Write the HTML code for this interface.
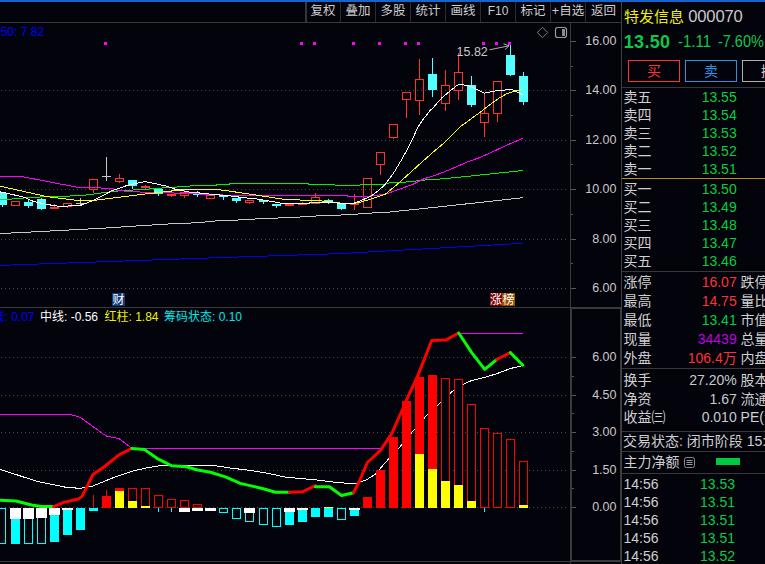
<!DOCTYPE html>
<html lang="zh-CN">
<head>
<meta charset="utf-8">
<title>特发信息 000070</title>
<style>
html,body{margin:0;padding:0;background:#03030c;}
body{width:765px;height:564px;overflow:hidden;position:relative;font-family:"Liberation Sans","Noto Sans CJK SC",sans-serif;color:#c8c8c8;}
#topbar{position:absolute;left:0;top:0;width:765px;height:2px;background:#1464d2;}
#toolbar{position:absolute;left:0;top:2px;width:621px;height:20px;border-bottom:1px solid #383838;}
.tb{position:absolute;top:0;height:20px;line-height:19px;font-size:12.5px;text-align:center;color:#cdcdcd;border-left:1px solid #2c2c2c;box-sizing:border-box;white-space:nowrap;}
#sep0{position:absolute;left:305px;top:2px;width:2px;height:20px;background:#363636;}
svg{position:absolute;left:0;top:0;}
svg text{font-family:"Liberation Sans","Noto Sans CJK SC",sans-serif;}
#ma250{position:absolute;left:0.7px;top:25.3px;font-size:12px;line-height:15px;color:#0000ff;white-space:nowrap;}
#subhdr{position:absolute;left:0;top:309.5px;font-size:12px;line-height:15px;white-space:nowrap;width:300px;height:15px;}
#subhdr span{position:absolute;top:0;}
.badge{position:absolute;height:13px;line-height:14.5px;font-size:12px;color:#fff;text-align:center;overflow:hidden;}
#panel{position:absolute;left:621px;top:2px;width:144px;height:562px;border-left:1px solid #404040;overflow:hidden;box-sizing:border-box;}
#panel .hl{position:absolute;left:0;width:144px;height:1px;background:#383838;}
#title{position:absolute;left:2px;top:5px;font-size:15px;line-height:20px;color:#f0f000;white-space:nowrap;}
.q{position:absolute;line-height:1;white-space:nowrap;transform-origin:0 50%;}
#code{left:65.6px;top:7.1px;font-size:16.6px;color:#c8c8c8;letter-spacing:-0.2px;left:66.3px}
#last{left:1.8px;top:31px;font-size:18px;font-weight:bold;color:#10c848;letter-spacing:0.3px;}
#chg{left:55.8px;top:32.4px;font-size:15.8px;color:#10c848;transform:scaleX(0.95);}
#pct{left:96px;top:32.4px;font-size:15.8px;color:#10c848;transform:scaleX(0.915);}
.btn{position:absolute;top:58px;height:20px;width:50px;border:1px solid;text-align:center;font-size:14px;line-height:20.5px;}
.r{position:absolute;left:0;width:144px;font-size:14px;white-space:nowrap;}
.r .l{position:absolute;left:1.5px;color:#d0d0d0;}
.r .v{position:absolute;right:29.3px;font-size:14px;}
.r .l2{position:absolute;left:118.6px;color:#d0d0d0;}
.sm{font-size:11px;letter-spacing:-1px;position:relative;top:-1px;}
</style>
</head>
<body>
<div id="topbar"></div>
<div id="toolbar"><div class="tb" style="left:305px;width:35px">复权</div><div class="tb" style="left:340px;width:35px">叠加</div><div class="tb" style="left:375px;width:35px">多股</div><div class="tb" style="left:410px;width:35px">统计</div><div class="tb" style="left:445px;width:35px">画线</div><div class="tb" style="left:480px;width:35px"><span style="font-size:12px">F10</span></div><div class="tb" style="left:515px;width:35px">标记</div><div class="tb" style="left:550px;width:35px">+自选</div><div class="tb" style="left:585px;width:36px">返回</div></div>
<div id="sep0"></div>
<svg width="622" height="564" viewBox="0 0 622 564">
<g shape-rendering="crispEdges" fill="#3a3a3a">
<rect x="570" y="22" width="1" height="542"/>
<rect x="0" y="307" width="621" height="1"/>
<rect x="0" y="561" width="621" height="1"/>
<rect x="571.5" y="308.5" width="49" height="252" fill="none" stroke="#3a3a3a" stroke-width="1"/>
</g>
<g id="main">
<line x1="1" y1="90.5" x2="567" y2="90.5" stroke="#4a4a4a" stroke-width="1" stroke-dasharray="1 3"/>
<line x1="1" y1="140.5" x2="567" y2="140.5" stroke="#4a4a4a" stroke-width="1" stroke-dasharray="1 3"/>
<line x1="1" y1="189.5" x2="567" y2="189.5" stroke="#4a4a4a" stroke-width="1" stroke-dasharray="1 3"/>
<line x1="1" y1="239.5" x2="567" y2="239.5" stroke="#4a4a4a" stroke-width="1" stroke-dasharray="1 3"/>
<line x1="1" y1="288.5" x2="567" y2="288.5" stroke="#4a4a4a" stroke-width="1" stroke-dasharray="1 3"/>
<g shape-rendering="crispEdges">
<rect x="2" y="192" width="1" height="15" fill="#54ffff"/>
<rect x="-2" y="193" width="9" height="12" fill="#54ffff"/>
<rect x="11.5" y="201.5" width="8" height="4" fill="none" stroke="#ff3232" stroke-width="1"/>
<rect x="28" y="199" width="1" height="9" fill="#54ffff"/>
<rect x="24" y="202" width="9" height="4" fill="#54ffff"/>
<rect x="41" y="198" width="1" height="12" fill="#54ffff"/>
<rect x="37" y="199" width="9" height="10" fill="#54ffff"/>
<rect x="54" y="204" width="1" height="5" fill="#ff3232"/>
<rect x="50" y="207" width="9" height="2" fill="#ff3232"/>
<rect x="67" y="207" width="1" height="1" fill="#ff3232"/>
<rect x="63.5" y="203.5" width="8" height="3" fill="none" stroke="#ff3232" stroke-width="1"/>
<rect x="80" y="198" width="1" height="7" fill="#c8c8c8"/>
<rect x="76" y="203" width="9" height="1" fill="#c8c8c8"/>
<rect x="93" y="190" width="1" height="3" fill="#ff3232"/>
<rect x="89.5" y="179.5" width="8" height="10" fill="none" stroke="#ff3232" stroke-width="1"/>
<rect x="106" y="157" width="1" height="24" fill="#c8c8c8"/>
<rect x="102" y="176" width="9" height="1" fill="#c8c8c8"/>
<rect x="119" y="174" width="1" height="4" fill="#ff3232"/>
<rect x="119" y="182" width="1" height="1" fill="#ff3232"/>
<rect x="115.5" y="178.5" width="8" height="3" fill="none" stroke="#ff3232" stroke-width="1"/>
<rect x="132" y="180" width="1" height="9" fill="#54ffff"/>
<rect x="128" y="180" width="9" height="6" fill="#54ffff"/>
<rect x="145" y="185" width="1" height="5" fill="#ff3232"/>
<rect x="141" y="186" width="9" height="2" fill="#ff3232"/>
<rect x="158" y="189" width="1" height="7" fill="#54ffff"/>
<rect x="154" y="189" width="9" height="5" fill="#54ffff"/>
<rect x="171" y="194" width="1" height="3" fill="#ff3232"/>
<rect x="167" y="194" width="9" height="2" fill="#ff3232"/>
<rect x="184" y="190" width="1" height="2" fill="#ff3232"/>
<rect x="184" y="196" width="1" height="2" fill="#ff3232"/>
<rect x="180.5" y="192.5" width="8" height="3" fill="none" stroke="#ff3232" stroke-width="1"/>
<rect x="197" y="191" width="1" height="6" fill="#54ffff"/>
<rect x="193" y="193" width="9" height="2" fill="#54ffff"/>
<rect x="206.5" y="195.5" width="8" height="3" fill="none" stroke="#ff3232" stroke-width="1"/>
<rect x="223" y="195" width="1" height="5" fill="#54ffff"/>
<rect x="219" y="195" width="9" height="2" fill="#54ffff"/>
<rect x="236" y="198" width="1" height="5" fill="#54ffff"/>
<rect x="232" y="198" width="9" height="3" fill="#54ffff"/>
<rect x="249" y="203" width="1" height="1" fill="#ff3232"/>
<rect x="245.5" y="200.5" width="8" height="2" fill="none" stroke="#ff3232" stroke-width="1"/>
<rect x="263" y="200" width="1" height="4" fill="#54ffff"/>
<rect x="259" y="200" width="9" height="2" fill="#54ffff"/>
<rect x="276" y="204" width="1" height="4" fill="#54ffff"/>
<rect x="272" y="204" width="9" height="2" fill="#54ffff"/>
<rect x="285.5" y="204.5" width="8" height="1" fill="none" stroke="#ff3232" stroke-width="1"/>
<rect x="302" y="202" width="1" height="3" fill="#ff3232"/>
<rect x="298" y="203" width="9" height="2" fill="#ff3232"/>
<rect x="315" y="193" width="1" height="4" fill="#ff3232"/>
<rect x="311.5" y="197.5" width="8" height="6" fill="none" stroke="#ff3232" stroke-width="1"/>
<rect x="328" y="199" width="1" height="5" fill="#54ffff"/>
<rect x="324" y="200" width="9" height="2" fill="#54ffff"/>
<rect x="341" y="203" width="1" height="7" fill="#54ffff"/>
<rect x="337" y="203" width="9" height="6" fill="#54ffff"/>
<rect x="354" y="194" width="1" height="16" fill="#ff3232"/>
<rect x="350" y="203" width="9" height="2" fill="#ff3232"/>
<rect x="363.5" y="178.5" width="8" height="29" fill="none" stroke="#ff3232" stroke-width="1"/>
<rect x="380" y="165" width="1" height="10" fill="#ff3232"/>
<rect x="376.5" y="152.5" width="8" height="12" fill="none" stroke="#ff3232" stroke-width="1"/>
<rect x="393" y="138" width="1" height="1" fill="#ff3232"/>
<rect x="389.5" y="124.5" width="8" height="13" fill="none" stroke="#ff3232" stroke-width="1"/>
<rect x="406" y="100" width="1" height="18" fill="#ff3232"/>
<rect x="402.5" y="92.5" width="8" height="7" fill="none" stroke="#ff3232" stroke-width="1"/>
<rect x="419" y="59" width="1" height="20" fill="#ff3232"/>
<rect x="419" y="101" width="1" height="14" fill="#ff3232"/>
<rect x="415.5" y="79.5" width="8" height="21" fill="none" stroke="#ff3232" stroke-width="1"/>
<rect x="432" y="58" width="1" height="39" fill="#54ffff"/>
<rect x="428" y="74" width="9" height="16" fill="#54ffff"/>
<rect x="445" y="70" width="1" height="15" fill="#ff3232"/>
<rect x="445" y="104" width="1" height="7" fill="#ff3232"/>
<rect x="441.5" y="85.5" width="8" height="18" fill="none" stroke="#ff3232" stroke-width="1"/>
<rect x="458" y="53" width="1" height="19" fill="#ff3232"/>
<rect x="458" y="91" width="1" height="9" fill="#ff3232"/>
<rect x="454.5" y="72.5" width="8" height="18" fill="none" stroke="#ff3232" stroke-width="1"/>
<rect x="471" y="76" width="1" height="31" fill="#54ffff"/>
<rect x="467" y="85" width="9" height="20" fill="#54ffff"/>
<rect x="484" y="94" width="1" height="19" fill="#ff3232"/>
<rect x="484" y="123" width="1" height="14" fill="#ff3232"/>
<rect x="480.5" y="113.5" width="8" height="9" fill="none" stroke="#ff3232" stroke-width="1"/>
<rect x="497" y="114" width="1" height="8" fill="#ff3232"/>
<rect x="493.5" y="81.5" width="8" height="32" fill="none" stroke="#ff3232" stroke-width="1"/>
<rect x="510" y="45" width="1" height="31" fill="#54ffff"/>
<rect x="506" y="55" width="9" height="20" fill="#54ffff"/>
<rect x="523" y="72" width="1" height="33" fill="#54ffff"/>
<rect x="519" y="76" width="9" height="26" fill="#54ffff"/>
</g>
<polyline points="0.0,265.4 200.0,258.3 340.0,253.6 503.8,244.4 523.0,243.2" fill="none" stroke="#0000f0" stroke-width="1" shape-rendering="crispEdges"/>
<polyline points="0.0,233.6 100.0,228.4 164.0,224.2 190.0,223.1 203.0,222.2 216.6,220.9 243.0,219.8 256.5,218.9 283.0,217.8 290.0,217.6 309.0,216.5 322.0,215.6 348.0,214.8 361.0,213.8 374.0,212.9 385.0,212.5 440.0,206.8 523.0,197.7" fill="none" stroke="#c8c8c8" stroke-width="1" shape-rendering="crispEdges"/>
<polyline points="0.0,199.5 8.0,199.5 16.0,198.5 48.0,196.5 74.5,195.9 86.0,195.0 100.0,193.2 115.0,191.2 139.0,189.6 152.0,188.8 167.0,187.6 177.0,187.0 195.0,185.6 216.0,185.6 217.0,184.4 229.0,184.4 230.0,183.2 308.0,183.2 309.0,184.3 334.0,184.3 335.0,185.2 360.0,185.2 361.0,184.6 385.0,184.3 387.3,183.1 409.9,181.8 423.2,180.1 439.0,179.1 449.8,178.1 463.0,176.8 470.0,176.1 523.0,170.5" fill="none" stroke="#00f000" stroke-width="1" shape-rendering="crispEdges"/>
<polyline points="0.0,176.6 22.0,176.6 78.5,187.5 99.0,187.9 113.0,188.8 115.0,189.9 128.0,191.5 152.0,192.5 167.0,192.8 180.0,193.2 195.0,193.6 204.0,194.5 230.0,195.2 270.0,196.0 290.0,195.6 347.5,195.6 348.0,196.5 365.0,196.5 371.4,195.9 385.0,194.3 412.6,184.5 423.2,179.1 436.5,174.8 449.8,169.6 463.0,163.9 470.0,160.9 480.0,157.5 493.2,151.5 506.5,145.3 523.1,138.2" fill="none" stroke="#ff00ff" stroke-width="1" shape-rendering="crispEdges"/>
<polyline points="0.0,186.2 48.0,196.8 74.5,200.1 92.0,200.5 95.0,200.3 112.0,198.1 135.0,195.2 152.0,193.2 167.0,191.6 180.0,189.9 195.0,189.4 216.6,189.4 230.0,191.2 252.5,194.5 270.0,197.2 283.0,199.2 290.0,199.9 309.0,200.1 325.0,201.2 338.0,202.9 351.5,203.6 359.5,202.5 371.4,198.9 385.0,194.5 397.9,183.8 412.6,170.5 425.9,158.5 436.5,149.2 442.5,144.3 449.8,137.3 460.4,126.6 469.0,120.4 480.0,112.3 493.2,102.3 498.5,98.5 506.5,93.8 514.5,91.2 522.4,89.4" fill="none" stroke="#ffff00" stroke-width="1" shape-rendering="crispEdges"/>
<polyline points="0.0,191.9 6.6,193.2 24.0,197.2 33.0,201.2 46.0,204.3 60.0,206.5 81.0,205.2 93.0,200.5 100.0,197.2 112.0,190.6 128.0,185.2 145.0,181.5 167.0,186.2 175.0,189.2 188.0,191.9 195.0,192.5 199.0,192.8 204.6,193.6 230.0,195.9 243.0,197.6 256.5,198.9 270.0,201.2 283.0,203.5 290.0,203.9 309.0,203.2 311.6,202.1 334.0,202.1 338.0,203.2 354.0,203.2 359.5,201.2 371.4,195.9 378.0,191.0 385.0,184.6 393.9,172.5 401.9,159.2 409.9,144.6 417.9,127.3 423.2,119.3 430.5,110.0 432.5,108.5 441.8,97.8 449.8,91.2 456.4,85.9 460.4,84.1 468.4,85.9 471.3,86.5 484.5,93.2 493.2,91.2 506.5,89.8 511.8,89.4 523.1,95.2" fill="none" stroke="#ffffff" stroke-width="1" shape-rendering="crispEdges"/>
<rect x="104" y="42" width="3" height="3" fill="#ff00ff"/>
<rect x="300" y="42" width="3" height="3" fill="#ff00ff"/>
<rect x="313" y="42" width="3" height="3" fill="#ff00ff"/>
<rect x="352" y="42" width="3" height="3" fill="#ff00ff"/>
<rect x="378" y="42" width="3" height="3" fill="#ff00ff"/>
<rect x="404" y="42" width="3" height="3" fill="#ff00ff"/>
<rect x="417" y="42" width="3" height="3" fill="#ff00ff"/>
<rect x="482" y="42" width="3" height="3" fill="#ff00ff"/>
<rect x="495" y="42" width="3" height="3" fill="#ff00ff"/>
<rect x="508" y="42" width="3" height="3" fill="#ff00ff"/>
<text x="456.5" y="55.5" font-size="12.5" fill="#c8c8c8">15.82</text>
<path d="M489.5 49.8 L509 45.8 M503.5 43.8 L509 45.8 L505 49.6" fill="none" stroke="#c0c0c0" stroke-width="0.9"/>
</g>
<g id="sub">
<line x1="1" y1="357.5" x2="567" y2="357.5" stroke="#4a4a4a" stroke-width="1" stroke-dasharray="1 3"/>
<line x1="1" y1="395.5" x2="567" y2="395.5" stroke="#4a4a4a" stroke-width="1" stroke-dasharray="1 3"/>
<line x1="1" y1="432.5" x2="567" y2="432.5" stroke="#4a4a4a" stroke-width="1" stroke-dasharray="1 3"/>
<line x1="1" y1="470.5" x2="567" y2="470.5" stroke="#4a4a4a" stroke-width="1" stroke-dasharray="1 3"/>
<line x1="1" y1="507.5" x2="567" y2="507.5" stroke="#4a4a4a" stroke-width="1" stroke-dasharray="1 3"/>
<polyline points="0.0,414.3 69.8,414.3 80.0,417.3 106.0,435.9 119.0,438.7 132.0,448.4 382.0,448.4 391.7,433.6 400.0,415.0 406.5,400.0 417.7,375.9 431.7,340.5 445.6,340.1 458.7,333.4 523.0,333.4" fill="none" stroke="#ff00ff" stroke-width="1" shape-rendering="crispEdges"/>
<polyline points="0.0,469.3 37.0,481.4 65.0,487.1 80.0,488.4 93.0,486.0 112.0,478.2 121.0,475.0 132.0,471.3 145.4,468.1 160.3,465.7 184.5,465.3 212.4,465.3 231.0,468.1 250.0,470.4 264.2,472.6 286.5,477.3 314.5,479.7 336.8,482.5 355.4,483.8 366.6,479.7 376.8,473.2 380.5,468.1 387.9,459.7 401.0,445.7 414.0,429.9 427.0,415.0 438.2,404.7 453.1,390.7 463.3,384.2 471.7,380.5 486.6,376.8 495.9,374.0 510.8,368.4 522.9,365.6" fill="none" stroke="#ffffff" stroke-width="1" shape-rendering="crispEdges"/>
<g shape-rendering="crispEdges">
<rect x="-2" y="508" width="9" height="36" fill="#03030c"/><rect x="-2.5" y="508.5" width="8" height="35" fill="none" stroke="#00ffff" stroke-width="1"/>
<rect x="11" y="508" width="9" height="36" fill="#00ffff"/>
<rect x="10" y="508" width="11" height="11" fill="#ffffff"/>
<rect x="24" y="508" width="9" height="36" fill="#03030c"/><rect x="24.5" y="508.5" width="8" height="35" fill="none" stroke="#00ffff" stroke-width="1"/>
<rect x="23" y="508" width="11" height="11" fill="#ffffff"/>
<rect x="37" y="508" width="9" height="36" fill="#03030c"/><rect x="37.5" y="508.5" width="8" height="35" fill="none" stroke="#00ffff" stroke-width="1"/>
<rect x="36" y="508" width="11" height="10" fill="#ffffff"/>
<rect x="50" y="508" width="9" height="34" fill="#00ffff"/>
<rect x="49" y="508" width="11" height="7" fill="#ffffff"/>
<rect x="63" y="508" width="9" height="27" fill="#00ffff"/>
<rect x="62" y="508" width="11" height="2" fill="#ffffff"/>
<rect x="76" y="508" width="9" height="22" fill="#00ffff"/>
<rect x="89" y="508" width="9" height="3" fill="#00ffff"/>
<rect x="93" y="495" width="1" height="13" fill="#ff0000"/>
<rect x="102" y="496" width="9" height="12" fill="#ff0000"/>
<rect x="106" y="490" width="1" height="6" fill="#ff0000"/>
<rect x="115" y="491" width="9" height="17" fill="#ffff00"/>
<rect x="115" y="488" width="9" height="3" fill="#ff0000"/>
<rect x="128.5" y="488.5" width="8" height="19" fill="#03030c" stroke="#ff0000" stroke-width="1"/>
<rect x="128" y="501" width="9" height="7" fill="#ffff00"/>
<rect x="141.5" y="488.5" width="8" height="19" fill="#03030c" stroke="#ff0000" stroke-width="1"/>
<rect x="141" y="506" width="9" height="2" fill="#ffff00"/>
<rect x="154.5" y="495.5" width="8" height="12" fill="#03030c" stroke="#ff0000" stroke-width="1"/>
<rect x="158" y="508" width="1" height="4" fill="#00ffff"/>
<rect x="167.5" y="499.5" width="8" height="8" fill="#03030c" stroke="#ff0000" stroke-width="1"/>
<rect x="171" y="508" width="1" height="4" fill="#00ffff"/>
<rect x="180.5" y="500.5" width="8" height="7" fill="#03030c" stroke="#ff0000" stroke-width="1"/>
<rect x="179" y="508" width="11" height="4" fill="#ffffff"/>
<rect x="193.5" y="504.5" width="8" height="3" fill="#03030c" stroke="#ff0000" stroke-width="1"/>
<rect x="192" y="508" width="11" height="3" fill="#ffffff"/>
<rect x="205" y="508" width="11" height="3" fill="#ffffff"/>
<rect x="219" y="508" width="9" height="5" fill="#03030c"/><rect x="219.5" y="508.5" width="8" height="4" fill="none" stroke="#00ffff" stroke-width="1"/>
<rect x="232" y="508" width="9" height="11" fill="#03030c"/><rect x="232.5" y="508.5" width="8" height="10" fill="none" stroke="#00ffff" stroke-width="1"/>
<rect x="245" y="508" width="9" height="14" fill="#03030c"/><rect x="245.5" y="508.5" width="8" height="13" fill="none" stroke="#00ffff" stroke-width="1"/>
<rect x="244" y="508" width="11" height="5" fill="#ffffff"/>
<rect x="259" y="508" width="9" height="17" fill="#03030c"/><rect x="259.5" y="508.5" width="8" height="16" fill="none" stroke="#00ffff" stroke-width="1"/>
<rect x="272" y="508" width="9" height="19" fill="#03030c"/><rect x="272.5" y="508.5" width="8" height="18" fill="none" stroke="#00ffff" stroke-width="1"/>
<rect x="285" y="508" width="9" height="17" fill="#00ffff"/>
<rect x="284" y="508" width="11" height="4" fill="#ffffff"/>
<rect x="298" y="508" width="9" height="14" fill="#00ffff"/>
<rect x="297" y="508" width="11" height="2" fill="#ffffff"/>
<rect x="311" y="508" width="9" height="9" fill="#00ffff"/>
<rect x="324" y="508" width="9" height="9" fill="#00ffff"/>
<rect x="324" y="507" width="9" height="1" fill="#ffff00"/>
<rect x="337" y="508" width="9" height="12" fill="#03030c"/><rect x="337.5" y="508.5" width="8" height="11" fill="none" stroke="#00ffff" stroke-width="1"/>
<rect x="350" y="508" width="9" height="8" fill="#00ffff"/>
<rect x="349" y="508" width="11" height="2" fill="#ffffff"/>
<rect x="363" y="497" width="9" height="11" fill="#ff0000"/>
<rect x="376" y="470" width="9" height="38" fill="#ff0000"/>
<rect x="389" y="437" width="9" height="71" fill="#ff0000"/>
<rect x="402" y="401" width="9" height="107" fill="#ff0000"/>
<rect x="415" y="377" width="9" height="77" fill="#ff0000"/>
<rect x="415" y="454" width="9" height="54" fill="#ffff00"/>
<rect x="428" y="375" width="9" height="94" fill="#ff0000"/>
<rect x="428" y="469" width="9" height="39" fill="#ffff00"/>
<rect x="441.5" y="378.5" width="8" height="129" fill="#03030c" stroke="#ff0000" stroke-width="1"/>
<rect x="441" y="481" width="9" height="27" fill="#ffff00"/>
<rect x="454.5" y="379.5" width="8" height="128" fill="#03030c" stroke="#ff0000" stroke-width="1"/>
<rect x="454" y="485" width="9" height="23" fill="#ffff00"/>
<rect x="467.5" y="404.5" width="8" height="103" fill="#03030c" stroke="#ff0000" stroke-width="1"/>
<rect x="467" y="501" width="9" height="7" fill="#ffff00"/>
<rect x="480.5" y="428.5" width="8" height="79" fill="#03030c" stroke="#ff0000" stroke-width="1"/>
<rect x="484" y="508" width="1" height="4" fill="#00ffff"/>
<rect x="493.5" y="433.5" width="8" height="74" fill="#03030c" stroke="#ff0000" stroke-width="1"/>
<rect x="506.5" y="439.5" width="8" height="68" fill="#03030c" stroke="#ff0000" stroke-width="1"/>
<rect x="519.5" y="461.5" width="8" height="46" fill="#03030c" stroke="#ff0000" stroke-width="1"/>
<rect x="519" y="505" width="9" height="3" fill="#ffff00"/>
</g>
<polyline points="0.0,500.3 15.8,501.0 31.6,505.0 41.0,506.6 53.7,506.6" fill="none" stroke="#00ff00" stroke-width="3" stroke-linejoin="round" stroke-linecap="round"/>
<polyline points="53.7,506.6 63.0,502.6 79.0,498.7 82.0,496.3 85.6,489.4 93.0,474.5 104.0,467.0 119.0,454.9 132.0,448.4" fill="none" stroke="#ff0000" stroke-width="3" stroke-linejoin="round" stroke-linecap="round"/>
<polyline points="132.0,448.4 144.4,449.5 158.4,459.2 171.4,465.7 186.3,466.7 197.5,470.0 210.5,472.2 225.4,476.9 240.3,483.4 250.0,485.6 264.2,489.0 275.4,492.3 289.3,492.3" fill="none" stroke="#00ff00" stroke-width="3" stroke-linejoin="round" stroke-linecap="round"/>
<polyline points="289.3,492.3 302.4,491.8 315.4,485.6" fill="none" stroke="#ff0000" stroke-width="3" stroke-linejoin="round" stroke-linecap="round"/>
<polyline points="315.4,486.8 329.4,486.8 341.5,495.5 353.6,492.7" fill="none" stroke="#00ff00" stroke-width="3" stroke-linejoin="round" stroke-linecap="round"/>
<polyline points="353.6,492.7 359.2,481.5 367.4,462.5 380.5,450.4 391.7,433.6 400.0,415.0 406.5,400.0 417.7,375.9 431.7,340.5 445.6,340.1 458.7,333.0" fill="none" stroke="#ff0000" stroke-width="3" stroke-linejoin="round" stroke-linecap="round"/>
<polyline points="458.7,333.0 471.7,352.6 484.7,369.3 496.8,359.5" fill="none" stroke="#00ff00" stroke-width="3" stroke-linejoin="round" stroke-linecap="round"/>
<polyline points="496.8,359.5 510.4,352.6" fill="none" stroke="#ff0000" stroke-width="3" stroke-linejoin="round" stroke-linecap="round"/>
<polyline points="510.4,352.6 522.9,365.2" fill="none" stroke="#00ff00" stroke-width="3" stroke-linejoin="round" stroke-linecap="round"/>
</g>
<g id="axes">
<g shape-rendering="crispEdges" fill="#585858">
<rect x="571" y="41" width="5" height="1"/>
<rect x="571" y="66" width="2" height="1"/>
<rect x="571" y="90" width="5" height="1"/>
<rect x="571" y="115" width="2" height="1"/>
<rect x="571" y="140" width="5" height="1"/>
<rect x="571" y="164" width="2" height="1"/>
<rect x="571" y="189" width="5" height="1"/>
<rect x="571" y="214" width="2" height="1"/>
<rect x="571" y="239" width="5" height="1"/>
<rect x="571" y="263" width="2" height="1"/>
<rect x="571" y="288" width="5" height="1"/>
<rect x="572" y="357" width="4" height="1"/>
<rect x="572" y="376" width="2" height="1"/>
<rect x="572" y="395" width="4" height="1"/>
<rect x="572" y="413" width="2" height="1"/>
<rect x="572" y="432" width="4" height="1"/>
<rect x="572" y="451" width="2" height="1"/>
<rect x="572" y="470" width="4" height="1"/>
<rect x="572" y="488" width="2" height="1"/>
<rect x="572" y="507" width="4" height="1"/>
</g>
<text x="616.5" y="44.9" font-size="12.5" fill="#c8c8c8" text-anchor="end">16.00</text>
<text x="616.5" y="94.3" font-size="12.5" fill="#c8c8c8" text-anchor="end">14.00</text>
<text x="616.5" y="143.8" font-size="12.5" fill="#c8c8c8" text-anchor="end">12.00</text>
<text x="616.5" y="193.2" font-size="12.5" fill="#c8c8c8" text-anchor="end">10.00</text>
<text x="616.5" y="242.7" font-size="12.5" fill="#c8c8c8" text-anchor="end">8.00</text>
<text x="616.5" y="292.1" font-size="12.5" fill="#c8c8c8" text-anchor="end">6.00</text>
<text x="616.5" y="361.2" font-size="12.5" fill="#c8c8c8" text-anchor="end">6.00</text>
<text x="616.5" y="398.7" font-size="12.5" fill="#c8c8c8" text-anchor="end">4.50</text>
<text x="616.5" y="436.2" font-size="12.5" fill="#c8c8c8" text-anchor="end">3.00</text>
<text x="616.5" y="473.7" font-size="12.5" fill="#c8c8c8" text-anchor="end">1.50</text>
<text x="616.5" y="511.2" font-size="12.5" fill="#c8c8c8" text-anchor="end">0.00</text>
</g>
<g id="icons" fill="none" stroke="#9a9a9a" stroke-width="1">
<path d="M542.5 27.3 L547.7 32.5 L542.5 37.7 L537.3 32.5 Z" stroke="#8c8c8c" stroke-width="0.9"/>
<rect x="555.5" y="27.5" width="11" height="10" rx="2.2" stroke-width="1.2"/>
<rect x="562" y="29" width="3" height="7" fill="#8a8a8a" stroke="none"/>
</g>
</svg>
<div id="ma250">50: 7.82</div>
<div class="badge" style="left:112px;top:293px;width:13px;background:#0e3c7a">财</div>
<div class="badge" style="left:490px;top:293px;width:12px;background:#800000">涨</div>
<div class="badge" style="left:502px;top:293px;width:13px;background:#985000">榜</div>
<div id="subhdr"><span style="color:#0000ff;right:265.5px">线: 0.07</span><span style="color:#fff;left:40px">中线: -0.56</span><span style="color:#f0f000;left:104.5px">红柱: 1.84</span><span style="color:#00e8e8;left:164px">筹码状态: 0.10</span></div>
<div id="panel">
<div id="title">特发信息</div><div class="q" id="code">000070</div>
<div class="q" id="last">13.50</div><div class="q" id="chg">-1.11</div><div class="q" id="pct">-7.60%</div>
<div class="btn" style="left:6px;border-color:#ff3232;color:#ff3232">买</div>
<div class="btn" style="left:63px;border-color:#3090e0;color:#3090e0">卖</div>
<div class="btn" style="left:120px;border-color:#b0b0b0;color:#c8c8c8">撤</div>
<div class="hl" style="top:85px"></div>
<div class="hl" style="top:176px;background:#c08a20"></div>
<div class="hl" style="top:269px"></div>
<div class="hl" style="top:366px"></div>
<div class="hl" style="top:429px"></div>
<div class="hl" style="top:449px"></div>
<div class="hl" style="top:471px"></div>
<div class="r" style="top:85.9px;height:18px;line-height:18px"><span class="l">卖五</span><span class="v" style="color:#00d040">13.55</span></div>
<div class="r" style="top:103.9px;height:18px;line-height:18px"><span class="l">卖四</span><span class="v" style="color:#00d040">13.54</span></div>
<div class="r" style="top:121.9px;height:18px;line-height:18px"><span class="l">卖三</span><span class="v" style="color:#00d040">13.53</span></div>
<div class="r" style="top:139.9px;height:18px;line-height:18px"><span class="l">卖二</span><span class="v" style="color:#00d040">13.52</span></div>
<div class="r" style="top:157.9px;height:18px;line-height:18px"><span class="l">卖一</span><span class="v" style="color:#00d040">13.51</span></div>
<div class="r" style="top:177.8px;height:18px;line-height:18px"><span class="l">买一</span><span class="v" style="color:#00d040">13.50</span></div>
<div class="r" style="top:195.8px;height:18px;line-height:18px"><span class="l">买二</span><span class="v" style="color:#00d040">13.49</span></div>
<div class="r" style="top:213.8px;height:18px;line-height:18px"><span class="l">买三</span><span class="v" style="color:#00d040">13.48</span></div>
<div class="r" style="top:231.8px;height:18px;line-height:18px"><span class="l">买四</span><span class="v" style="color:#00d040">13.47</span></div>
<div class="r" style="top:249.8px;height:18px;line-height:18px"><span class="l">买五</span><span class="v" style="color:#00d040">13.46</span></div>
<div class="r" style="top:271.0px;height:19px;line-height:19px"><span class="l">涨停</span><span class="v" style="color:#ff3232">16.07</span><span class="l2">跌停</span></div>
<div class="r" style="top:289.9px;height:19px;line-height:19px"><span class="l">最高</span><span class="v" style="color:#ff3232">14.75</span><span class="l2">量比</span></div>
<div class="r" style="top:308.8px;height:19px;line-height:19px"><span class="l">最低</span><span class="v" style="color:#00d040">13.41</span><span class="l2">市值</span></div>
<div class="r" style="top:327.7px;height:19px;line-height:19px"><span class="l">现量</span><span class="v" style="color:#c000e0">34439</span><span class="l2">总量</span></div>
<div class="r" style="top:346.6px;height:19px;line-height:19px"><span class="l">外盘</span><span class="v" style="color:#ff3232">106.4万</span><span class="l2">内盘</span></div>
<div class="r" style="top:368.7px;height:19px;line-height:19px"><span class="l">换手</span><span class="v" style="color:#c8c8c8">27.20%</span><span class="l2">股本</span></div>
<div class="r" style="top:387.6px;height:19px;line-height:19px"><span class="l">净资</span><span class="v" style="color:#c8c8c8">1.67</span><span class="l2">流通</span></div>
<div class="r" style="top:406.4px;height:19px;line-height:19px"><span class="l">收益㈢</span><span class="v" style="color:#c8c8c8">0.010</span><span class="l2">PE(动)</span></div>
<div class="r" style="top:430.2px;height:18px;line-height:18px"><span class="l" style="left:1px">交易状态: 闭市阶段 15:00</span></div>
<div class="r" style="top:450px;height:20px;line-height:20px"><span class="l">主力净额</span></div>
<svg width="144" height="30" style="left:0;top:450px"><rect x="62.5" y="5.5" width="10" height="10" rx="2" fill="none" stroke="#8a8a8a" stroke-width="1"/><path d="M64.5 8.5h6M64.5 10.5h6M64.5 12.5h6" stroke="#9a9a9a" stroke-width="1"/><rect x="94" y="6" width="24" height="7" fill="#00c840"/></svg>
<div class="r" style="top:473.1px;height:18px;line-height:18px"><span class="l">14:56</span><span class="v" style="color:#00d040;right:31px">13.53</span></div>
<div class="r" style="top:491.0px;height:18px;line-height:18px"><span class="l">14:56</span><span class="v" style="color:#00d040;right:31px">13.51</span></div>
<div class="r" style="top:508.9px;height:18px;line-height:18px"><span class="l">14:56</span><span class="v" style="color:#00d040;right:31px">13.51</span></div>
<div class="r" style="top:526.8px;height:18px;line-height:18px"><span class="l">14:56</span><span class="v" style="color:#00d040;right:31px">13.51</span></div>
<div class="r" style="top:544.7px;height:18px;line-height:18px"><span class="l">14:56</span><span class="v" style="color:#00d040;right:31px">13.52</span></div>
</div>
</body>
</html>
